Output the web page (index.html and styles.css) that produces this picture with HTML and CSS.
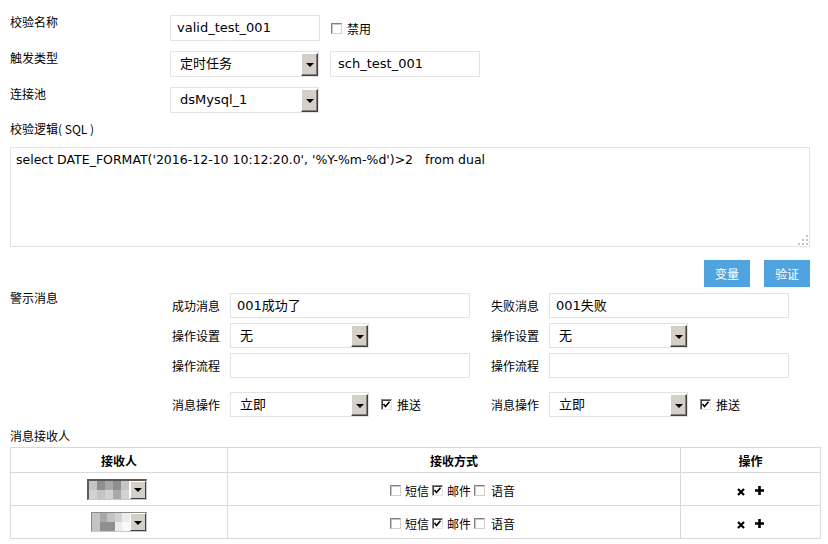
FILE: index.html
```html
<!DOCTYPE html>
<html lang="zh">
<head>
<meta charset="utf-8">
<title>校验</title>
<link rel="stylesheet" href="styles.css">
</head>
<body>
<div class="page">
  <div class="row r1">
    <div class="lbl">校验名称</div>
    <div class="input w150">valid_test_001</div>
    <label class="chk ml11"><span class="cb"></span><span class="cbt">禁用</span></label>
  </div>
  <div class="row r2">
    <div class="lbl">触发类型</div>
    <div class="select w149"><span class="sv">定时任务</span><span class="arrow"><i></i></span></div>
    <div class="input w150 ml11 pl7">sch_test_001</div>
  </div>
  <div class="row r2">
    <div class="lbl">连接池</div>
    <div class="select w149"><span class="sv">dsMysql_1</span><span class="arrow"><i></i></span></div>
  </div>
  <div class="sql-label">校验逻辑( SQL )</div>
  <div class="textarea">select DATE_FORMAT('2016-12-10 10:12:20.0', '%Y-%m-%d')&gt;2 &nbsp; from dual<span class="grip"><svg width="10" height="10" viewBox="0 0 10 10"><g fill="#c4c4c4"><rect x="8" y="0" width="2" height="2"/><rect x="4" y="4" width="2" height="2"/><rect x="8" y="4" width="2" height="2"/><rect x="0" y="8" width="2" height="2"/><rect x="4" y="8" width="2" height="2"/><rect x="8" y="8" width="2" height="2"/></g></svg></span></div>
  <div class="btns">
    <button class="btn">变量</button>
    <button class="btn">验证</button>
  </div>
  <div class="alerts">
    <div class="lbl alert-lbl">警示消息</div>
    <div class="group">
      <div class="grow"><span class="glbl">成功消息</span><div class="input w240">001成功了</div></div>
      <div class="grow"><span class="glbl">操作设置</span><div class="select w139"><span class="sv">无</span><span class="arrow"><i></i></span></div></div>
      <div class="grow"><span class="glbl">操作流程</span><div class="input w240"></div></div>
      <div class="grow last"><span class="glbl">消息操作</span><div class="select w139"><span class="sv">立即</span><span class="arrow"><i></i></span></div><label class="chk ml12"><span class="cb on"><svg width="9" height="9" viewBox="0 0 9 9"><path d="M1.5 4 L3.5 6.5 L7.5 1.8" fill="none" stroke="#000" stroke-width="1.6"/></svg></span><span class="cbt">推送</span></label></div>
    </div>
    <div class="group g2">
      <div class="grow"><span class="glbl">失败消息</span><div class="input w240">001失败</div></div>
      <div class="grow"><span class="glbl">操作设置</span><div class="select w139"><span class="sv">无</span><span class="arrow"><i></i></span></div></div>
      <div class="grow"><span class="glbl">操作流程</span><div class="input w240"></div></div>
      <div class="grow last"><span class="glbl">消息操作</span><div class="select w139"><span class="sv">立即</span><span class="arrow"><i></i></span></div><label class="chk ml12"><span class="cb on"><svg width="9" height="9" viewBox="0 0 9 9"><path d="M1.5 4 L3.5 6.5 L7.5 1.8" fill="none" stroke="#000" stroke-width="1.6"/></svg></span><span class="cbt">推送</span></label></div>
    </div>
  </div>
  <div class="recv-label">消息接收人</div>
  <table class="tbl">
    <colgroup><col class="c1"><col class="c2"><col class="c3"></colgroup>
    <thead>
      <tr><th>接收人</th><th>接收方式</th><th>操作</th></tr>
    </thead>
    <tbody>
      <tr>
        <td><span class="bsel"><span class="mosaic">
          <i class="m3"></i><i class="m1"></i><i class="m2"></i><i class="m1"></i><i class="m3"></i>
          <i class="m4"></i><i class="m3"></i><i class="m4"></i><i class="m2"></i><i class="m4"></i>
        </span><span class="barrow"><i></i></span></span></td>
        <td class="ways"><span class="cb"></span><span class="wt">短信</span><span class="cb on"><svg width="9" height="9" viewBox="0 0 9 9"><path d="M1.5 4 L3.5 6.5 L7.5 1.8" fill="none" stroke="#000" stroke-width="1.6"/></svg></span><span class="wt">邮件</span><span class="cb"></span><span class="wt w3">语音</span></td>
        <td class="ops"><svg class="ix" width="8" height="8" viewBox="0 0 8 8"><path d="M1 1 L7 7 M7 1 L1 7" stroke="#000" stroke-width="2.2"/></svg><svg class="ip" width="9" height="9" viewBox="0 0 9 9"><path d="M4.5 0 V9 M0 4.5 H9" stroke="#000" stroke-width="2.6"/></svg></td>
      </tr>
      <tr>
        <td><span class="bsel b2"><span class="mosaic">
          <i class="m3"></i><i class="m2"></i><i class="m3"></i><i class="m4"></i><i class="m5"></i>
          <i class="m3"></i><i class="m1"></i><i class="m1"></i><i class="m5"></i><i class="m6"></i>
        </span><span class="barrow"><i></i></span></span></td>
        <td class="ways"><span class="cb"></span><span class="wt">短信</span><span class="cb on"><svg width="9" height="9" viewBox="0 0 9 9"><path d="M1.5 4 L3.5 6.5 L7.5 1.8" fill="none" stroke="#000" stroke-width="1.6"/></svg></span><span class="wt">邮件</span><span class="cb"></span><span class="wt w3">语音</span></td>
        <td class="ops"><svg class="ix" width="8" height="8" viewBox="0 0 8 8"><path d="M1 1 L7 7 M7 1 L1 7" stroke="#000" stroke-width="2.2"/></svg><svg class="ip" width="9" height="9" viewBox="0 0 9 9"><path d="M4.5 0 V9 M0 4.5 H9" stroke="#000" stroke-width="2.6"/></svg></td>
      </tr>
    </tbody>
  </table>
</div>
</body>
</html>
```

FILE: styles.css
```css
* { box-sizing: border-box; }
html, body { margin: 0; padding: 0; background: #fff; }
body {
  font-family: "Noto Sans CJK SC", "DejaVu Sans", sans-serif;
  font-size: 12px;
  color: #000;
}
.page {
  width: 820px;
  padding: 15px 0 0 10px;
}
.row {
  display: flex;
  align-items: flex-start;
  height: 26px;
}
.r2 { margin-top: 10px; }
.lbl {
  width: 160px;
  flex: none;
  line-height: 14px;
}
.input, .select {
  height: 26px;
  border: 1px solid #e3e3e3;
  background: #fff;
  font-family: "DejaVu Sans", "Noto Sans CJK SC", sans-serif;
  font-size: 13px;
  line-height: 24px;
  white-space: nowrap;
  flex: none;
}
.input { padding-left: 6px; }
.pl7 { padding-left: 7px; }
.w150 { width: 150px; }
.w149 { width: 149px; }
.w240 { width: 240px; }
.w139 { width: 139px; }
.ml11 { margin-left: 11px; }
.ml12 { margin-left: 12px; }
.select {
  display: flex;
  align-items: stretch;
}
.sv { flex: 1; padding-left: 9px; font-size: 13px; }
.arrow {
  width: 17px;
  flex: none;
  background: #d4d0c8;
  border-top: 1px solid #fff;
  border-left: 1px solid #fff;
  border-right: 1px solid #404040;
  border-bottom: 1px solid #404040;
  box-shadow: inset -1px -1px 0 #808080;
  display: flex;
  align-items: center;
  justify-content: center;
  margin: 1px 0 0 0;
}
.arrow i, .barrow i {
  width: 0; height: 0;
  border-left: 4px solid transparent;
  border-right: 4px solid transparent;
  border-top: 4px solid #000;
  margin-top: 1px;
}
.chk {
  display: flex;
  align-items: center;
  height: 26px;
}
.cb {
  width: 11px;
  height: 11px;
  flex: none;
  display: inline-flex;
  align-items: center;
  justify-content: center;
  background: #fff;
  border-top: 1px solid #808080;
  border-left: 1px solid #808080;
  border-right: 1px solid #d4d0c8;
  border-bottom: 1px solid #d4d0c8;
  box-shadow: inset 1px 1px 0 #c8c8c8;
  vertical-align: middle;
}
.cb.on { box-shadow: inset 1px 1px 0 #404040; border-right-color: #e4e4e4; border-bottom-color: #e4e4e4; }
.cb svg { display: block; }
.cbt { margin-left: 5px; }
.sql-label {
  margin-top: 9px;
  line-height: 14px;
  height: 25px;
}
.textarea {
  position: relative;
  width: 800px;
  height: 100px;
  border: 1px solid #e3e3e3;
  padding: 5px 5px;
  font-family: "DejaVu Sans", sans-serif;
  font-size: 12.5px;
  line-height: 14px;
  white-space: pre;
}
.grip {
  position: absolute;
  right: 1px;
  bottom: 1px;
  line-height: 0;
}
.btns {
  display: flex;
  justify-content: flex-end;
  gap: 14px;
  width: 800px;
  margin-top: 13px;
}
.btn {
  width: 46px;
  height: 27px;
  border: none;
  background: #4fa3de;
  color: #fff;
  font-family: "Noto Sans CJK SC", sans-serif;
  font-size: 12px;
  padding: 0;
}
.alerts {
  display: flex;
  margin-top: 6px;
}
.alert-lbl { margin-top: -2px; }
.group {
  display: flex;
  flex-direction: column;
  gap: 5px;
  margin-left: 2px;
  width: 298px;
}
.g2 { margin-left: 21px; }
.grow {
  display: flex;
  align-items: center;
  height: 25px;
}
.grow .input, .grow .select { height: 25px; line-height: 23px; }
.grow.last { margin-top: 9px; }
.glbl { width: 58px; flex: none; }
.recv-label {
  margin-top: 12px;
  line-height: 14px;
  height: 18px;
}
.tbl {
  border-collapse: collapse;
  width: 810px;
  table-layout: fixed;
}
.c1 { width: 217px; }
.c2 { width: 453px; }
.c3 { width: 140px; }
.tbl th, .tbl td {
  border: 1px solid #d9d9d9;
  text-align: center;
  padding: 0;
}
.tbl th { height: 25px; font-weight: bold; }
.tbl td { height: 33px; }
.bsel {
  display: inline-flex;
  vertical-align: middle;
  height: 21px;
  border-top: 2px solid #5a5a5a;
  border-left: 2px solid #5a5a5a;
  border-right: 1px solid #c8c8c8;
  border-bottom: 1px solid #c8c8c8;
  margin-left: -5px;
}
.bsel.b2 { height: 20px; border-top-color: #8a8a8a; border-left-color: #8a8a8a; border-top-width: 1px; border-left-width: 1px; margin-left: 0; }
.mosaic {
  display: grid;
  grid-template-columns: repeat(5, 8px);
  grid-auto-rows: 1fr;
  width: 40px;
}
.bsel .mosaic { width: 41px; }
.bsel.b2 .mosaic { width: 38px; grid-template-columns: repeat(5, 7.6px); }
.mosaic i { display: block; }
.m1 { background: #8f8f8f; }
.m2 { background: #a8a8a8; }
.m3 { background: #c4c4c4; }
.m4 { background: #d2d2d2; }
.m5 { background: #ececec; }
.m6 { background: #fafafa; }
.barrow {
  width: 16px;
  background: #d4d0c8;
  border-top: 1px solid #fff;
  border-left: 1px solid #fff;
  border-right: 1px solid #404040;
  border-bottom: 1px solid #404040;
  display: flex;
  align-items: center;
  justify-content: center;
}
.ways { font-size: 12px; }
.ways .cb { margin-right: 4px; }
.wt { display: inline-block; vertical-align: middle; line-height: 14px; margin-right: 3px; }
.wt.w3 { margin-left: 2px; }
.ops svg { vertical-align: middle; display: inline-block; }
.ix { margin-right: 10px; margin-top: 1px; }
.ip { margin-top: -1px; }
```
